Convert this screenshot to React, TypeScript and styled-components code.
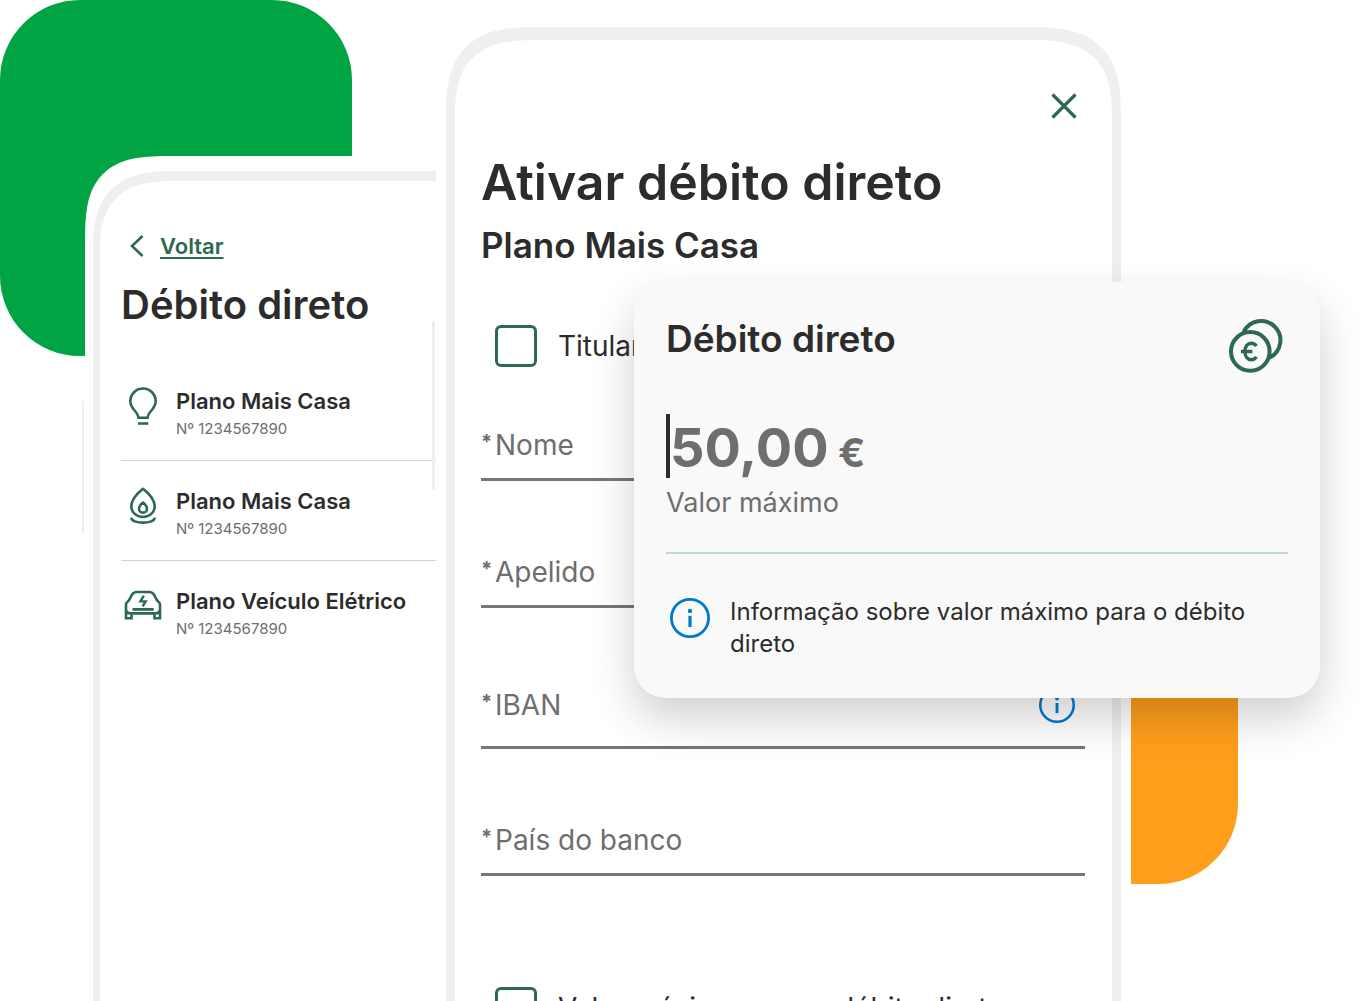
import React, { useState } from "react";
import styled, { createGlobalStyle } from "styled-components";

const color = {
  ink: "#2c2c2c",
  muted: "#6e6e6e",
  pine: "#2b6952",
  leaf: "#00a443",
  orange: "#ff9e1b",
  info: "#007acf",
  frame: "#efefef",
  line: "#c3dad1",
};

const GlobalStyle = createGlobalStyle`
  *, *::before, *::after { box-sizing: border-box; }
  body {
    margin: 0;
    background: #fff;
    color: ${color.ink};
    font-family: Inter, "Open Sans", sans-serif;
  }
  h1, h2, h3, p, ul { margin: 0; padding: 0; }
  button, input { font: inherit; color: inherit; }
  svg { display: block; }
`;

const Stage = styled.main`
  position: relative;
  display: grid;
  grid-template-columns: minmax(0, 351fr) minmax(0, 695fr);
  align-items: start;
  height: 100vh;
  padding: 0 237px 0 85px;
  overflow: hidden;
`;

const GreenShape = styled.div`
  position: absolute;
  top: 0;
  left: 0;
  width: 352px;
  height: 356px;
  border-radius: 80px;
  background: ${color.leaf};
`;

const OrangeShape = styled.div`
  position: absolute;
  top: 640px;
  right: 130px;
  width: 130px;
  height: 244px;
  border-radius: 0 0 80px 0;
  background: ${color.orange};
`;

const BackPhone = styled.section`
  position: relative;
  min-height: 860px;
  margin-top: 156px;
  padding: 15px 0 0 8px;
  background: #fff;
  border-top-left-radius: 64px;
  @supports (corner-shape: squircle) {
    border-top-left-radius: 88px;
    corner-shape: superellipse(1.6);
  }
  &::before {
    content: "";
    position: absolute;
    top: 245px;
    left: -3px;
    width: 2px;
    height: 133px;
    background: ${color.frame};
  }
`;

const BackScreen = styled.div`
  min-height: 845px;
  padding: 51px 0 0 21px;
  border: solid ${color.frame};
  border-width: 10px 0 0 7px;
  border-top-left-radius: 62px;
  @supports (corner-shape: squircle) {
    border-top-left-radius: 80px;
    corner-shape: superellipse(1.4);
  }
`;

const FrontPhone = styled.section`
  position: relative;
  margin-top: 14px;
  padding: 13px 10px 0;
  background: #fff;
  &::before {
    content: "";
    position: absolute;
    top: 307px;
    left: -4px;
    width: 3px;
    height: 169px;
    background: ${color.frame};
  }
`;

const FrontScreen = styled.div`
  min-height: 1040px;
  padding: 45px 27px 0 26px;
  border: solid ${color.frame};
  border-width: 13px 9px 0;
  border-radius: 66px 66px 0 0;
  @supports (corner-shape: squircle) {
    border-radius: 92px 92px 0 0;
    corner-shape: superellipse(1.5);
  }
`;

const BackLink = styled.a`
  display: inline-flex;
  align-items: center;
  gap: 16px;
  height: 28px;
  padding-left: 9px;
  color: ${color.pine};
  font-size: 22px;
  font-weight: 600;
  line-height: 28px;
  text-decoration: none;
  vertical-align: top;
  span {
    text-decoration: underline;
    text-decoration-thickness: 2px;
    text-underline-offset: 3px;
    text-decoration-skip-ink: none;
  }
`;

const BackTitle = styled.h2`
  margin-top: 21px;
  font-size: 40px;
  font-weight: 600;
  line-height: 48px;
  white-space: nowrap;
`;

const PlanList = styled.ul`
  margin-top: 32px;
  list-style: none;
`;

const PlanRow = styled.li`
  display: flex;
  gap: 13px;
  height: 100px;
  padding: 26px 0 0 2px;
  white-space: nowrap;
  &:not(:last-child) {
    border-bottom: 1px solid ${color.line};
  }
`;

const PlanName = styled.h3`
  font-size: 22px;
  font-weight: 600;
  line-height: 28px;
`;

const PlanNumber = styled.p`
  color: ${color.muted};
  font-size: 15px;
  line-height: 28px;
`;

const CloseButton = styled.button`
  display: grid;
  place-items: center;
  width: 42px;
  height: 42px;
  margin-left: auto;
  padding: 0;
  border: 0;
  background: none;
  color: ${color.pine};
`;

const Title = styled.h1`
  margin-top: 25px;
  font-size: 50px;
  font-weight: 600;
  line-height: 60px;
  white-space: nowrap;
`;

const Subtitle = styled.h2`
  margin-top: 11px;
  font-size: 35px;
  font-weight: 600;
  line-height: 44px;
`;

const CheckRow = styled.label<{ $gap: number }>`
  display: flex;
  align-items: center;
  gap: 21px;
  height: 42px;
  margin-top: ${(p) => p.$gap}px;
  padding-left: 14px;
  font-size: 28px;
  white-space: nowrap;
`;

const CheckBox = styled.input`
  appearance: none;
  width: 42px;
  height: 42px;
  margin: 0;
  border: 3px solid ${color.pine};
  border-radius: 6px;
  background: #fff;
  &:checked {
    background: ${color.pine};
  }
`;

const Fields = styled.div`
  display: grid;
  gap: 71px;
  margin-top: 58px;
`;

const FieldBox = styled.div<{ $tall?: boolean }>`
  display: grid;
  height: ${(p) => (p.$tall ? 70 : 56)}px;
  border-bottom: 3px solid #767676;
  > * {
    grid-area: 1 / 1;
  }
`;

const FieldLabel = styled.label<{ $tall?: boolean }>`
  display: flex;
  gap: 4px;
  height: ${(p) => (p.$tall ? 52 : 40)}px;
  color: ${color.muted};
  font-size: 28px;
  line-height: ${(p) => (p.$tall ? 52 : 40)}px;
`;

const Required = styled.span`
  width: 10px;
  margin-top: -3px;
  font-size: 20px;
  font-weight: 700;
`;

const FieldInput = styled.input`
  width: 100%;
  height: 100%;
  padding: 0 48px 0 14px;
  border: 0;
  outline: 0;
  background: none;
  font-size: 28px;
`;

const HelpButton = styled.button`
  justify-self: end;
  display: grid;
  place-items: center;
  width: 38px;
  height: 52px;
  margin-right: 9px;
  padding: 0;
  border: 0;
  background: none;
  color: ${color.info};
`;

const Card = styled.aside`
  position: absolute;
  top: 282px;
  right: 48px;
  width: 686px;
  padding: 37px 32px 38px;
  border-radius: 32px;
  background: #f9f9f9;
  box-shadow: 0 20px 44px rgba(0, 0, 0, 0.19);
`;

const CardHeader = styled.header`
  display: flex;
  justify-content: space-between;
  padding-right: 5px;
  color: ${color.pine};
`;

const CardTitle = styled.h2`
  color: ${color.ink};
  font-size: 37px;
  font-weight: 600;
  line-height: 40px;
`;

const AmountRow = styled.div`
  display: flex;
  align-items: flex-end;
  height: 64px;
  margin-top: 41px;
  color: ${color.muted};
  font-weight: 700;
`;

const Caret = styled.span`
  width: 4px;
  height: 64px;
  background: ${color.ink};
`;

const AmountValue = styled.div`
  display: flex;
  align-items: baseline;
`;

const AmountInput = styled.input`
  width: 168px;
  height: 60px;
  padding: 0;
  border: 0;
  outline: 0;
  background: none;
  font-size: 54px;
  line-height: 60px;
`;

const Currency = styled.span`
  font-size: 40px;
  line-height: 40px;
`;

const AmountLabel = styled.label`
  display: block;
  margin-top: 7px;
  padding-bottom: 31px;
  border-bottom: 2px solid ${color.line};
  color: ${color.muted};
  font-size: 27px;
  line-height: 36px;
`;

const InfoNote = styled.div`
  display: flex;
  gap: 20px;
  margin-top: 42px;
  padding-left: 4px;
  color: ${color.info};
  svg {
    flex: none;
    margin-top: 2px;
  }
  p {
    color: ${color.ink};
    font-size: 24px;
    line-height: 32px;
  }
`;

const InfoIcon = ({ size }: { size: number }) => (
  <svg width={size} height={size} viewBox="0 0 40 40" fill="none" aria-hidden="true">
    <circle cx="20" cy="20" r="18.6" stroke="currentColor" strokeWidth="2.8" />
    <circle cx="20" cy="12.9" r="2.2" fill="currentColor" />
    <path d="M20 17.8V29" stroke="currentColor" strokeWidth="3.2" />
  </svg>
);

const CoinsIcon = () => (
  <svg width="54" height="54" viewBox="0 0 54 54" fill="none" stroke="currentColor" strokeWidth="4" aria-hidden="true">
    <path d="M14.6 13.1A19.3 19.3 0 1 1 40.6 38.6" />
    <circle cx="21.3" cy="32.4" r="19.3" />
    <path d="M27.4 27.2c-1.2-1.9-3-2.9-5.2-2.9-3.7 0-6.3 3.3-6.3 8.2s2.6 8.2 6.3 8.2c2.2 0 4-1 5.2-2.9M11.9 32.5h11.5" strokeWidth="3.4" />
  </svg>
);

const BulbIcon = () => (
  <svg width="40" height="40" viewBox="0 0 40 40" fill="none" stroke="currentColor" strokeWidth="2.6" aria-hidden="true">
    <path d="M15.4 30.8h9.2c0-6 8.1-8.600 8.1-16.600a12.700 12.700 0 1 0-25.400 0c0 8 8.100 10.600 8.100 16.600z" />
    <path d="M15 36.500h10.300" />
  </svg>
);

const FlameIcon = () => (
  <svg width="40" height="40" viewBox="0 0 40 40" fill="none" stroke="currentColor" strokeWidth="2.6" aria-hidden="true">
    <path d="M20 1.8C16.500 4.600 8.300 12 8.300 19.300a11.700 10.700 0 0 0 23.400 0C31.700 12 23.500 4.600 20 1.800z" strokeLinejoin="round" />
    <path d="M20 15.500c-1.800 1.500-4 3.800-4 6.200 0 2.300 1.800 3.900 4 3.900s4-1.600 4-3.900c0-2.400-2.200-4.700-4-6.200z" strokeLinejoin="round" />
    <path d="M8.400 30.600c-.6 6.700 23.800 6.700 23.200 0" />
  </svg>
);

const CarIcon = () => (
  <svg width="40" height="40" viewBox="0 0 40 40" fill="none" stroke="currentColor" strokeWidth="2.6" aria-hidden="true">
    <path d="M8.500 31.200H3V17.500c0-1.300.6-2.100 1.600-2.800 1.500-1.200 2.100-2.200 2.900-4.200C9.100 6.500 10.500 5 13.500 5h13c3 0 4.400 1.500 6 5.500.8 2 1.400 3 2.900 4.200 1 .7 1.600 1.500 1.600 2.800v13.700h-5.500v-5h-23z" />
    <path d="M3 23.500c.6 1.900 1.800 2.700 3.800 2.700h26.400c2 0 3.200-.8 3.800-2.700M9.500 22.400h21.200" />
    <path d="M20.800 8.700l-3.400 5.700h5.200l-3 5" strokeWidth="2.4" />
  </svg>
);

const PlanIcon = styled.span`
  width: 40px;
  height: 40px;
  color: ${color.pine};
`;

const plans = [
  { name: "Plano Mais Casa", number: "Nº 1234567890", Icon: BulbIcon },
  { name: "Plano Mais Casa", number: "Nº 1234567890", Icon: FlameIcon },
  { name: "Plano Veículo Elétrico", number: "Nº 1234567890", Icon: CarIcon },
];

const fields = [
  { id: "nome", label: "Nome" },
  { id: "apelido", label: "Apelido" },
  { id: "iban", label: "IBAN", help: true },
  { id: "pais", label: "País do banco" },
];

export default function App() {
  const [amount, setAmount] = useState("50,00");
  return (
    <>
      <GlobalStyle />
      <Stage>
        <GreenShape />
        <OrangeShape />

        <BackPhone>
          <BackScreen>
            <BackLink href="#voltar">
              <svg width="14" height="22" viewBox="0 0 14 22" fill="none" stroke="currentColor" strokeWidth="2.6" aria-hidden="true">
                <path d="M12.5 1L2 11l10.500 10" />
              </svg>
              <span>Voltar</span>
            </BackLink>
            <BackTitle>Débito direto</BackTitle>
            <PlanList>
              {plans.map(({ name, number, Icon }, i) => (
                <PlanRow key={i}>
                  <PlanIcon>
                    <Icon />
                  </PlanIcon>
                  <div>
                    <PlanName>{name}</PlanName>
                    <PlanNumber>{number}</PlanNumber>
                  </div>
                </PlanRow>
              ))}
            </PlanList>
          </BackScreen>
        </BackPhone>

        <FrontPhone>
          <FrontScreen>
            <CloseButton type="button" aria-label="Fechar">
              <svg width="26" height="26" viewBox="0 0 26 26" fill="none" stroke="currentColor" strokeWidth="3.2" aria-hidden="true">
                <path d="M1.5 1.5l23 23M24.5 1.5l-23 23" />
              </svg>
            </CloseButton>
            <Title>Ativar débito direto</Title>
            <Subtitle>Plano Mais Casa</Subtitle>
            <CheckRow $gap={58}>
              <CheckBox type="checkbox" />
              Titular
            </CheckRow>
            <Fields>
              {fields.map((f) => (
                <FieldBox key={f.id} $tall={f.help}>
                  <FieldLabel htmlFor={f.id} $tall={f.help}>
                    <Required>*</Required>
                    {f.label}
                  </FieldLabel>
                  <FieldInput id={f.id} type="text" required />
                  {f.help && (
                    <HelpButton type="button" aria-label="Ajuda">
                      <InfoIcon size={36} />
                    </HelpButton>
                  )}
                </FieldBox>
              ))}
            </Fields>
            <CheckRow $gap={111}>
              <CheckBox type="checkbox" />
              Valor máximo para o débito direto
            </CheckRow>
          </FrontScreen>
        </FrontPhone>

        <Card>
          <CardHeader>
            <CardTitle>Débito direto</CardTitle>
            <CoinsIcon />
          </CardHeader>
          <AmountRow>
            <Caret />
            <AmountValue>
              <AmountInput id="valor" value={amount} onChange={(e) => setAmount(e.target.value)} inputMode="decimal" />
              <Currency>€</Currency>
            </AmountValue>
          </AmountRow>
          <AmountLabel htmlFor="valor">Valor máximo</AmountLabel>
          <InfoNote>
            <InfoIcon size={40} />
            <p>Informação sobre valor máximo para o débito direto</p>
          </InfoNote>
        </Card>
      </Stage>
    </>
  );
}
